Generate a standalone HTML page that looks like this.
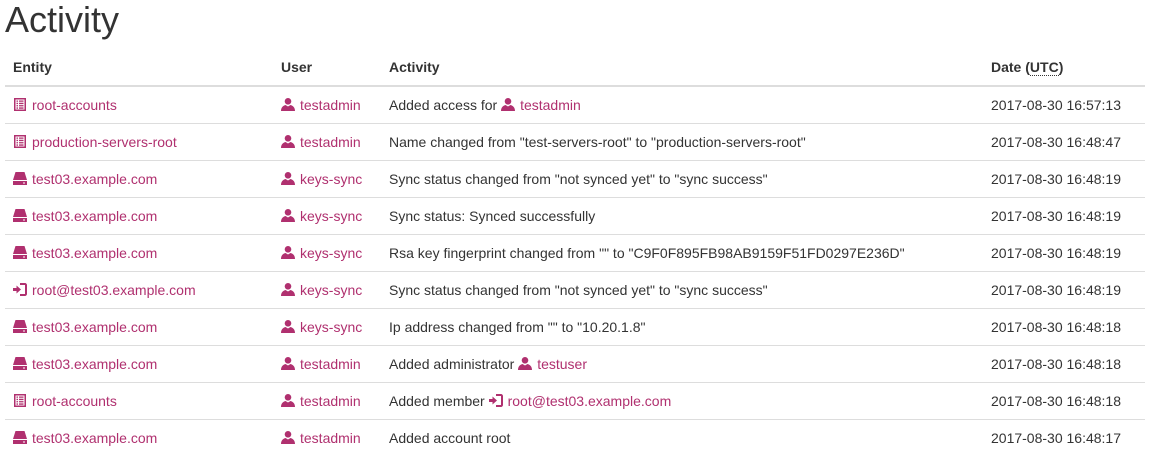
<!DOCTYPE html>
<html><head><meta charset="utf-8"><style>
body{margin:0;background:#fff;font-family:"Liberation Sans",sans-serif;font-size:14px;color:#333;width:1150px;height:439px;overflow:hidden}
h1{font-weight:400;font-size:36px;margin:0;padding:0 0 0 5px;line-height:40px;height:48px}
table{position:absolute;left:5px;top:48px;width:1140px;border-collapse:collapse}
th{text-align:left;font-weight:bold;padding:0 8px;height:37px;border-bottom:2px solid #ddd;vertical-align:middle}
td{padding:0 8px;height:36px;border-top:1px solid #ddd;vertical-align:middle;white-space:nowrap}
a{color:#b0306f;text-decoration:none}
svg{vertical-align:-1px;margin-right:5px;fill:#b0306f}
abbr{text-decoration:none;border-bottom:1px dotted #333}
</style></head><body>
<h1>Activity</h1>
<table>
<tr><th style="width:252px">Entity</th><th style="width:92px">User</th><th style="width:586px">Activity</th><th>Date (<abbr>UTC</abbr>)</th></tr>
<!--rows-->
<tr><td><a><svg width="14" height="13" viewBox="0 0 14 13"><path d="M1 0h12v13H1z M2.5 1.5v10h9v-10z M3.5 2.5h1.5v1.3H3.5z M6 2.5h4.5v1.3H6z M3.5 4.8h1.5v1.3H3.5z M6 4.8h4.5v1.3H6z M3.5 7.1h1.5v1.3H3.5z M6 7.1h4.5v1.3H6z M3.5 9.4h1.5v1.3H3.5z M6 9.4h4.5v1.3H6z" fill-rule="evenodd"/></svg>root-accounts</a></td><td><a><svg width="14" height="13" viewBox="0 0 14 13"><circle cx="7" cy="3.3" r="3.3"/><path d="M0 13c0-4 2.5-5.5 4.5-6l2.5 1.5 2.5-1.5c2 .5 4.5 2 4.5 6z"/></svg>testadmin</a></td><td>Added access for <a><svg width="14" height="13" viewBox="0 0 14 13"><circle cx="7" cy="3.3" r="3.3"/><path d="M0 13c0-4 2.5-5.5 4.5-6l2.5 1.5 2.5-1.5c2 .5 4.5 2 4.5 6z"/></svg>testadmin</a></td><td>2017-08-30 16:57:13</td></tr>
<tr><td><a><svg width="14" height="13" viewBox="0 0 14 13"><path d="M1 0h12v13H1z M2.5 1.5v10h9v-10z M3.5 2.5h1.5v1.3H3.5z M6 2.5h4.5v1.3H6z M3.5 4.8h1.5v1.3H3.5z M6 4.8h4.5v1.3H6z M3.5 7.1h1.5v1.3H3.5z M6 7.1h4.5v1.3H6z M3.5 9.4h1.5v1.3H3.5z M6 9.4h4.5v1.3H6z" fill-rule="evenodd"/></svg>production-servers-root</a></td><td><a><svg width="14" height="13" viewBox="0 0 14 13"><circle cx="7" cy="3.3" r="3.3"/><path d="M0 13c0-4 2.5-5.5 4.5-6l2.5 1.5 2.5-1.5c2 .5 4.5 2 4.5 6z"/></svg>testadmin</a></td><td>Name changed from "test-servers-root" to "production-servers-root"</td><td>2017-08-30 16:48:47</td></tr>
<tr><td><a><svg width="14" height="13" viewBox="0 0 14 13"><path d="M2.5 0h9l2.5 8H0z M0 9h14v4H0z" /><path d="M10 10.5h2v1h-2z" fill="#fff"/></svg>test03.example.com</a></td><td><a><svg width="14" height="13" viewBox="0 0 14 13"><circle cx="7" cy="3.3" r="3.3"/><path d="M0 13c0-4 2.5-5.5 4.5-6l2.5 1.5 2.5-1.5c2 .5 4.5 2 4.5 6z"/></svg>keys-sync</a></td><td>Sync status changed from "not synced yet" to "sync success"</td><td>2017-08-30 16:48:19</td></tr>
<tr><td><a><svg width="14" height="13" viewBox="0 0 14 13"><path d="M2.5 0h9l2.5 8H0z M0 9h14v4H0z" /><path d="M10 10.5h2v1h-2z" fill="#fff"/></svg>test03.example.com</a></td><td><a><svg width="14" height="13" viewBox="0 0 14 13"><circle cx="7" cy="3.3" r="3.3"/><path d="M0 13c0-4 2.5-5.5 4.5-6l2.5 1.5 2.5-1.5c2 .5 4.5 2 4.5 6z"/></svg>keys-sync</a></td><td>Sync status: Synced successfully</td><td>2017-08-30 16:48:19</td></tr>
<tr><td><a><svg width="14" height="13" viewBox="0 0 14 13"><path d="M2.5 0h9l2.5 8H0z M0 9h14v4H0z" /><path d="M10 10.5h2v1h-2z" fill="#fff"/></svg>test03.example.com</a></td><td><a><svg width="14" height="13" viewBox="0 0 14 13"><circle cx="7" cy="3.3" r="3.3"/><path d="M0 13c0-4 2.5-5.5 4.5-6l2.5 1.5 2.5-1.5c2 .5 4.5 2 4.5 6z"/></svg>keys-sync</a></td><td>Rsa key fingerprint changed from "" to "C9F0F895FB98AB9159F51FD0297E236D"</td><td>2017-08-30 16:48:19</td></tr>
<tr><td><a><svg width="14" height="13" viewBox="0 0 14 13"><path d="M0 5h3.5V2.5L8 6.5l-4.5 4V8H0z M7 0h5c1 0 2 1 2 2v9c0 1-1 2-2 2H7v-2h5V2H7z"/></svg>root@test03.example.com</a></td><td><a><svg width="14" height="13" viewBox="0 0 14 13"><circle cx="7" cy="3.3" r="3.3"/><path d="M0 13c0-4 2.5-5.5 4.5-6l2.5 1.5 2.5-1.5c2 .5 4.5 2 4.5 6z"/></svg>keys-sync</a></td><td>Sync status changed from "not synced yet" to "sync success"</td><td>2017-08-30 16:48:19</td></tr>
<tr><td><a><svg width="14" height="13" viewBox="0 0 14 13"><path d="M2.5 0h9l2.5 8H0z M0 9h14v4H0z" /><path d="M10 10.5h2v1h-2z" fill="#fff"/></svg>test03.example.com</a></td><td><a><svg width="14" height="13" viewBox="0 0 14 13"><circle cx="7" cy="3.3" r="3.3"/><path d="M0 13c0-4 2.5-5.5 4.5-6l2.5 1.5 2.5-1.5c2 .5 4.5 2 4.5 6z"/></svg>keys-sync</a></td><td>Ip address changed from "" to "10.20.1.8"</td><td>2017-08-30 16:48:18</td></tr>
<tr><td><a><svg width="14" height="13" viewBox="0 0 14 13"><path d="M2.5 0h9l2.5 8H0z M0 9h14v4H0z" /><path d="M10 10.5h2v1h-2z" fill="#fff"/></svg>test03.example.com</a></td><td><a><svg width="14" height="13" viewBox="0 0 14 13"><circle cx="7" cy="3.3" r="3.3"/><path d="M0 13c0-4 2.5-5.5 4.5-6l2.5 1.5 2.5-1.5c2 .5 4.5 2 4.5 6z"/></svg>testadmin</a></td><td>Added administrator <a><svg width="14" height="13" viewBox="0 0 14 13"><circle cx="7" cy="3.3" r="3.3"/><path d="M0 13c0-4 2.5-5.5 4.5-6l2.5 1.5 2.5-1.5c2 .5 4.5 2 4.5 6z"/></svg>testuser</a></td><td>2017-08-30 16:48:18</td></tr>
<tr><td><a><svg width="14" height="13" viewBox="0 0 14 13"><path d="M1 0h12v13H1z M2.5 1.5v10h9v-10z M3.5 2.5h1.5v1.3H3.5z M6 2.5h4.5v1.3H6z M3.5 4.8h1.5v1.3H3.5z M6 4.8h4.5v1.3H6z M3.5 7.1h1.5v1.3H3.5z M6 7.1h4.5v1.3H6z M3.5 9.4h1.5v1.3H3.5z M6 9.4h4.5v1.3H6z" fill-rule="evenodd"/></svg>root-accounts</a></td><td><a><svg width="14" height="13" viewBox="0 0 14 13"><circle cx="7" cy="3.3" r="3.3"/><path d="M0 13c0-4 2.5-5.5 4.5-6l2.5 1.5 2.5-1.5c2 .5 4.5 2 4.5 6z"/></svg>testadmin</a></td><td>Added member <a><svg width="14" height="13" viewBox="0 0 14 13"><path d="M0 5h3.5V2.5L8 6.5l-4.5 4V8H0z M7 0h5c1 0 2 1 2 2v9c0 1-1 2-2 2H7v-2h5V2H7z"/></svg>root@test03.example.com</a></td><td>2017-08-30 16:48:18</td></tr>
<tr><td><a><svg width="14" height="13" viewBox="0 0 14 13"><path d="M2.5 0h9l2.5 8H0z M0 9h14v4H0z" /><path d="M10 10.5h2v1h-2z" fill="#fff"/></svg>test03.example.com</a></td><td><a><svg width="14" height="13" viewBox="0 0 14 13"><circle cx="7" cy="3.3" r="3.3"/><path d="M0 13c0-4 2.5-5.5 4.5-6l2.5 1.5 2.5-1.5c2 .5 4.5 2 4.5 6z"/></svg>testadmin</a></td><td>Added account root</td><td>2017-08-30 16:48:17</td></tr>
</table>
</body></html>
